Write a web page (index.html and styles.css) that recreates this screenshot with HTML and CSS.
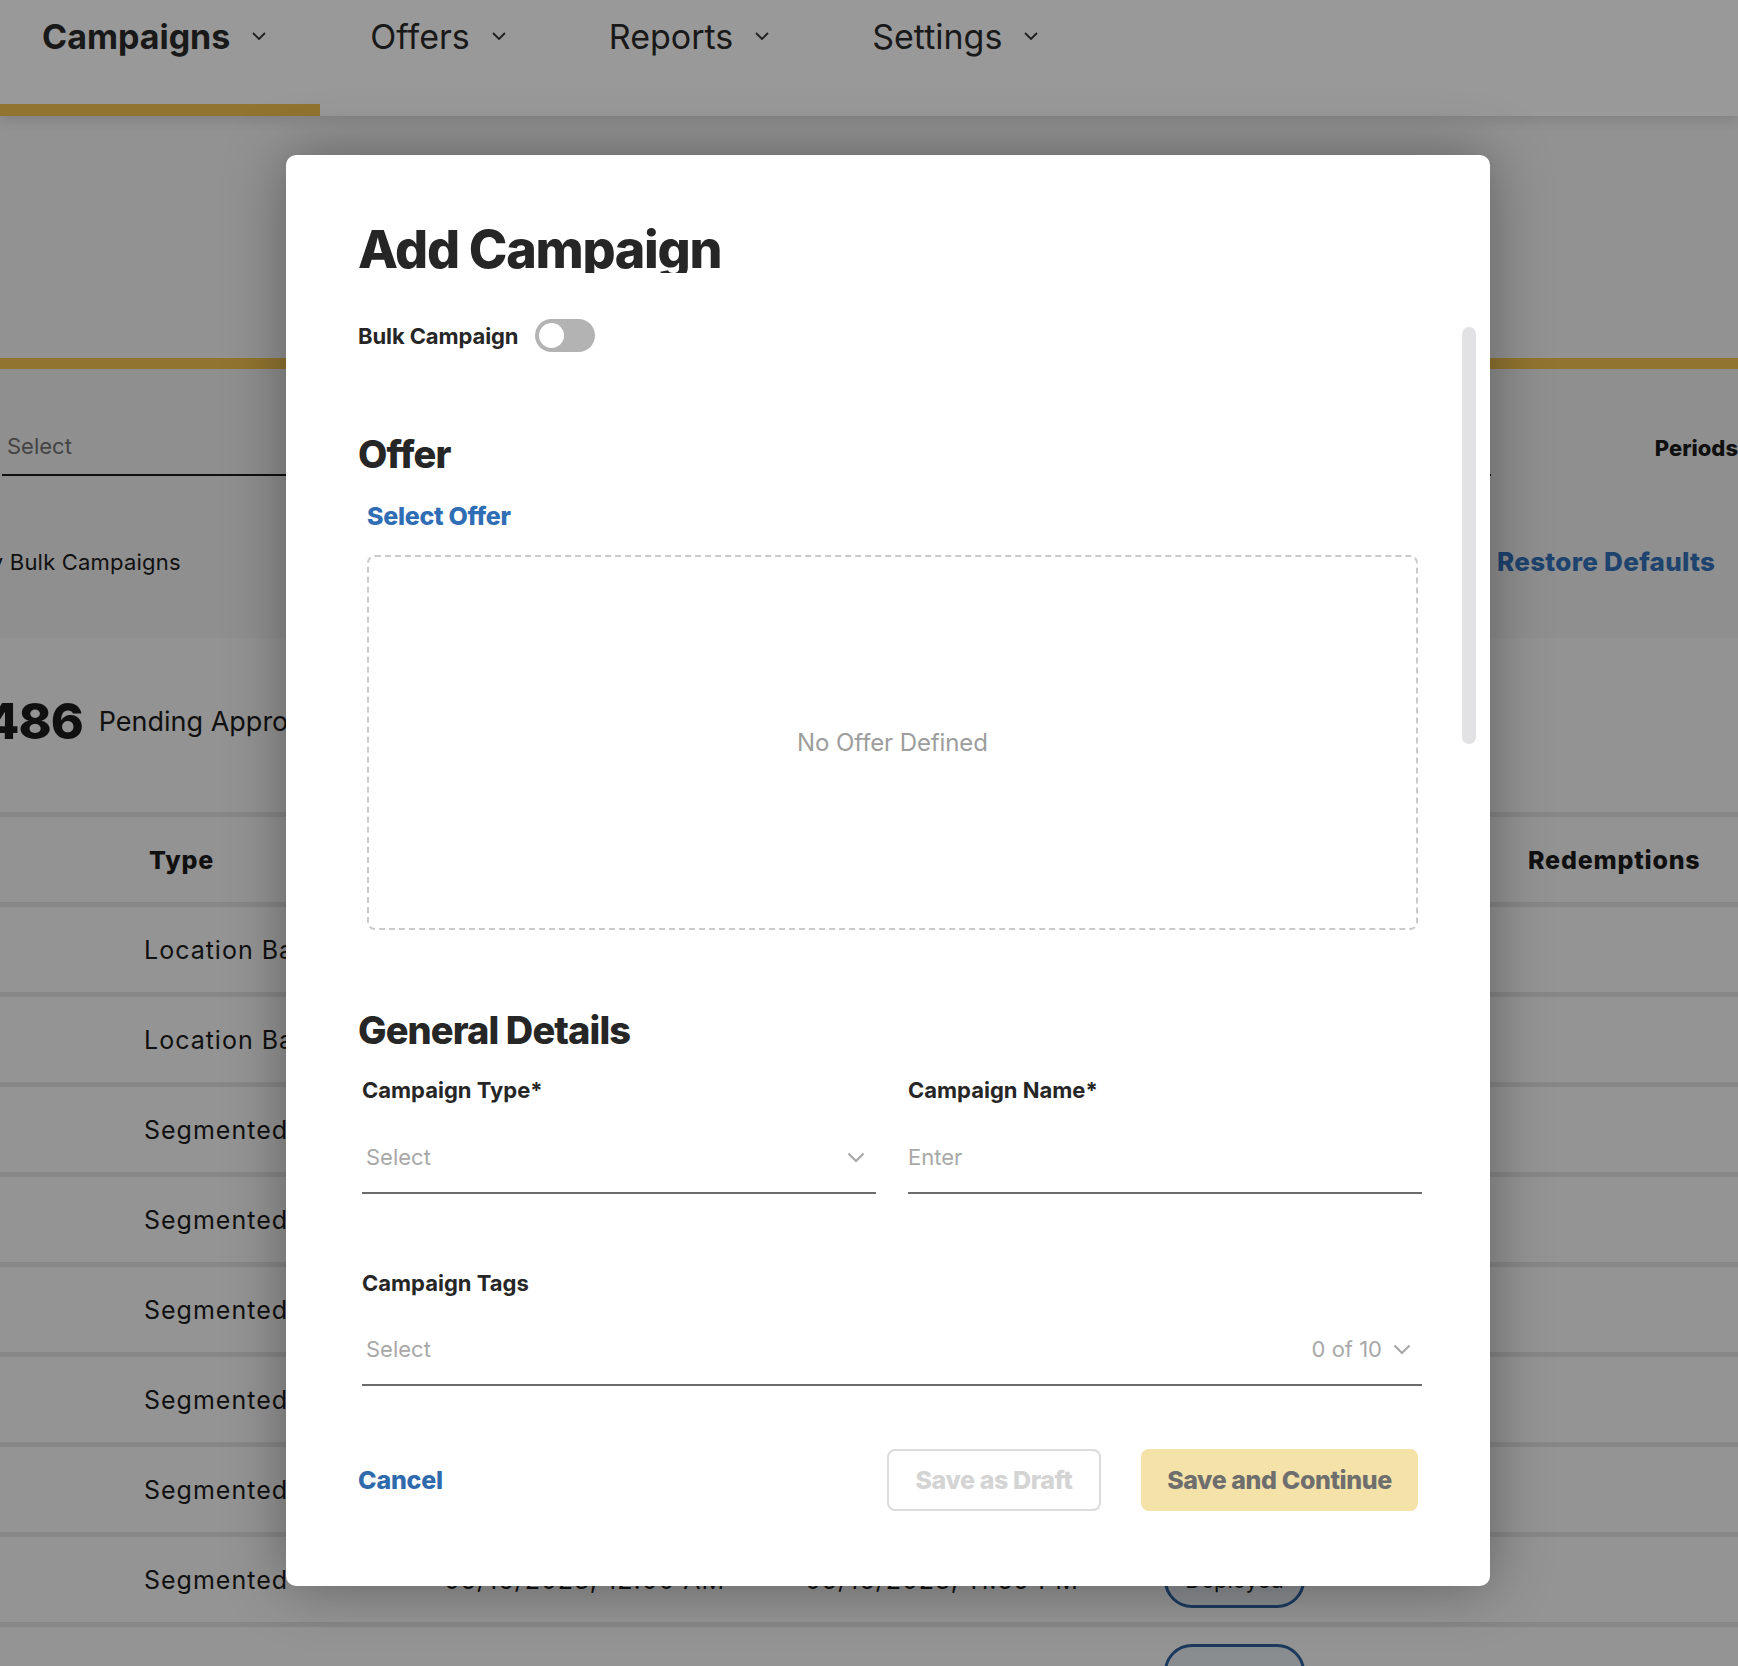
FILE: index.html
```html
<!DOCTYPE html>
<html lang="en">
<head>
  <meta charset="UTF-8">
  <meta name="viewport" content="width=device-width, initial-scale=1.0">
  <title>Add Campaign</title>
  <link rel="stylesheet" href="styles.css">
</head>
<body>
  <nav class="topnav">
    <div class="nav-item active">Campaigns <svg class="chev" viewBox="0 0 14 9"><polyline points="1,1 7,7 13,1"/></svg></div>
    <div class="nav-item">Offers <svg class="chev" viewBox="0 0 14 9"><polyline points="1,1 7,7 13,1"/></svg></div>
    <div class="nav-item">Reports <svg class="chev" viewBox="0 0 14 9"><polyline points="1,1 7,7 13,1"/></svg></div>
    <div class="nav-item">Settings <svg class="chev" viewBox="0 0 14 9"><polyline points="1,1 7,7 13,1"/></svg></div>
  </nav>

  <section class="hero"></section>
  <div class="gold-rule"></div>

  <section class="filters">
    <div class="filter-select">Select</div>
    <div class="periods">Periods</div>
    <div class="bulk-filter">Only Bulk Campaigns</div>
    <a class="restore">Restore Defaults</a>
  </section>

  <section class="stats">
    <span class="stat-num">486</span>
    <span class="stat-label">Pending Approval</span>
  </section>

  <div class="grid">
    <div class="trow thead">
      <span>Type</span><span>Start</span><span>End</span><span>Status</span><span>Redemptions</span>
    </div>
    <div class="trow"><span>Location Based</span><span>05/16/2023, 12:00 AM</span><span>05/16/2023, 11:59 PM</span><span><i class="pill">Deployed</i></span><span></span></div>
    <div class="trow"><span>Location Based</span><span>05/16/2023, 12:00 AM</span><span>05/16/2023, 11:59 PM</span><span><i class="pill">Deployed</i></span><span></span></div>
    <div class="trow"><span>Segmented</span><span>05/16/2023, 12:00 AM</span><span>05/16/2023, 11:59 PM</span><span><i class="pill">Deployed</i></span><span></span></div>
    <div class="trow"><span>Segmented</span><span>05/16/2023, 12:00 AM</span><span>05/16/2023, 11:59 PM</span><span><i class="pill">Deployed</i></span><span></span></div>
    <div class="trow"><span>Segmented</span><span>05/16/2023, 12:00 AM</span><span>05/16/2023, 11:59 PM</span><span><i class="pill">Deployed</i></span><span></span></div>
    <div class="trow"><span>Segmented</span><span>05/16/2023, 12:00 AM</span><span>05/16/2023, 11:59 PM</span><span><i class="pill">Deployed</i></span><span></span></div>
    <div class="trow"><span>Segmented</span><span>05/16/2023, 12:00 AM</span><span>05/16/2023, 11:59 PM</span><span><i class="pill">Deployed</i></span><span></span></div>
    <div class="trow"><span>Segmented</span><span>05/16/2023, 12:00 AM</span><span>05/16/2023, 11:59 PM</span><span><i class="pill">Deployed</i></span><span></span></div>
    <div class="trow tall"><span>Segmented</span><span>05/16/2023, 12:00 AM</span><span>05/16/2023, 11:59 PM</span><span><i class="pill">Pending<br>Approval</i></span><span></span></div>
  </div>

  <div class="overlay"></div>

  <div class="modal">
    <div class="scroll-thumb"></div>
    <h1 class="modal-title">Add Campaign</h1>

    <div class="bulk-row">
      <span class="bulk-label">Bulk Campaign</span>
      <span class="toggle"><span class="knob"></span></span>
    </div>

    <h2 class="section-title offer-title">Offer</h2>
    <a class="select-offer">Select Offer</a>
    <div class="offer-box">No Offer Defined</div>

    <h2 class="section-title details-title">General Details</h2>
    <div class="fields">
      <div class="field">
        <label>Campaign Type*</label>
        <div class="input">
          <span class="placeholder">Select</span>
          <svg class="input-chev" viewBox="0 0 18 11"><polyline points="1.5,1.5 9,9 16.5,1.5"/></svg>
        </div>
      </div>
      <div class="field">
        <label>Campaign Name*</label>
        <div class="input text">
          <span class="placeholder">Enter</span>
        </div>
      </div>
      <div class="field wide">
        <label>Campaign Tags</label>
        <div class="input">
          <span class="placeholder">Select</span>
          <span class="count">0 of 10</span>
          <svg class="input-chev" viewBox="0 0 18 11"><polyline points="1.5,1.5 9,9 16.5,1.5"/></svg>
        </div>
      </div>
    </div>

    <div class="modal-footer">
      <a class="cancel">Cancel</a>
      <div class="actions">
        <button class="btn-draft" disabled>Save as Draft</button>
        <button class="btn-continue" disabled>Save and Continue</button>
      </div>
    </div>
  </div>
</body>
</html>
```

FILE: styles.css
```css
* {
  box-sizing: border-box;
}
html, body {
  margin: 0;
}
body {
  width: 1738px;
  height: 1666px;
  overflow: hidden;
  position: relative;
  font-family: Inter, 'Liberation Sans', sans-serif;
  color: #1c1c1c;
  background: #f7f7f7;
}

/* top navigation */
.topnav {
  height: 116px;
  background: #fff;
  display: flex;
  padding-left: 42px;
  box-shadow: 0 4px 14px rgba(0,0,0,0.12);
  position: relative;
  z-index: 1;
}
.nav-item {
  position: relative;
  display: flex;
  align-items: center;
  gap: 22px;
  height: 72px;
  padding-right: 103px;
  font-size: 34px;
  color: #2b2b2b;
}
.nav-item.active {
  font-weight: 700;
  padding-right: 104px;
}
.nav-item.active::after {
  content: '';
  position: absolute;
  left: -42px;
  width: 320px;
  top: 104px;
  height: 12px;
  background: #f2c14f;
}
.chev {
  width: 14px;
  height: 9px;
  fill: none;
  stroke: #333;
  stroke-width: 1.8;
}

.hero {
  height: 242px;
  background: #f4f4f4;
}
.gold-rule {
  height: 11px;
  background: #f2c14f;
}

/* filters */
.filters {
  height: 269px;
  background: #eeeeee;
  display: grid;
  grid-template-columns: 1491px 1fr;
  grid-template-rows: 47px 69px 34px;
  padding-top: 60px;
}
.filter-select {
  margin-left: 2px;
  padding-left: 5px;
  font-size: 22px;
  line-height: 34px;
  color: #727272;
  border-bottom: 2px solid #1c1c1c;
}
.periods {
  justify-self: end;
  align-self: start;
  font-size: 22px;
  font-weight: 800;
  line-height: 38px;
}
.bulk-filter {
  grid-row: 3;
  margin-left: -45px;
  font-size: 22px;
  line-height: 34px;
  white-space: nowrap;
  letter-spacing: 0.2px;
}
.restore {
  grid-row: 3;
  margin-left: 6px;
  font-size: 26px;
  font-weight: 800;
  line-height: 34px;
  letter-spacing: 0.3px;
  color: #3271b8;
  white-space: nowrap;
}

/* stats */
.stats {
  height: 174px;
  background: #f5f5f5;
  display: flex;
  align-items: center;
  gap: 16px;
  padding-bottom: 8px;
}
.stat-num {
  margin-left: -15px;
  font-size: 50px;
  font-weight: 800;
  letter-spacing: -1px;
}
.stat-label {
  font-size: 27px;
}

/* table */
.grid {
  height: 856px;
  overflow: hidden;
}
.trow {
  display: grid;
  grid-template-columns: 300px 361px 359px 364px 1fr;
  align-items: center;
  height: 90px;
  padding-left: 144px;
  border-top: 5px solid #e2e2e2;
  background: #f7f7f7;
  font-size: 25px;
  letter-spacing: 1px;
  white-space: nowrap;
}
.trow.thead {
  font-weight: 800;
  font-size: 25px;
  letter-spacing: 0.8px;
  background: #f5f5f5;
}
.trow.thead span:first-child {
  padding-left: 5px;
}
.trow.tall {
  height: 150px;
}
.pill {
  display: inline-flex;
  align-items: center;
  justify-content: center;
  width: 141px;
  height: 56px;
  border: 3px solid #2d619d;
  border-radius: 28px;
  background: #e6ebf1;
  font-style: normal;
  font-size: 22px;
  letter-spacing: 0;
}
.tall .pill {
  height: 112px;
  text-align: center;
  line-height: 30px;
}

.overlay {
  position: absolute;
  inset: 0;
  background: rgba(0,0,0,0.4);
  z-index: 10;
}

/* modal */
.modal {
  position: absolute;
  left: 286px;
  top: 155px;
  width: 1204px;
  height: 1431px;
  z-index: 20;
  background: #fff;
  border-radius: 10px;
  box-shadow: 0 0 60px rgba(0,0,0,0.35);
  padding: 68px 68px 0 72px;
  overflow: hidden;
  color: #262626;
}
.scroll-thumb {
  position: absolute;
  right: 14px;
  top: 172px;
  width: 14px;
  height: 417px;
  border-radius: 7px;
  background: #e2e2e5;
}
.modal-title {
  margin: 0;
  font-size: 52px;
  font-weight: 800;
  line-height: 54px;
  height: 50px;
  overflow: hidden;
  letter-spacing: -1.3px;
}
.bulk-row {
  display: flex;
  align-items: center;
  gap: 17px;
  height: 33px;
  margin-top: 46px;
}
.bulk-label {
  font-size: 22px;
  font-weight: 700;
  letter-spacing: -0.1px;
}
.toggle {
  display: flex;
  align-items: center;
  width: 60px;
  height: 33px;
  border-radius: 17px;
  background: #b3b3b3;
  padding-left: 4px;
}
.knob {
  width: 25px;
  height: 25px;
  border-radius: 50%;
  background: #fff;
}
.section-title {
  margin: 0;
  font-size: 38px;
  font-weight: 800;
  line-height: 40px;
  letter-spacing: -0.9px;
}
.offer-title {
  margin-top: 82px;
}
.select-offer {
  display: block;
  margin: 28px 0 0 9px;
  font-size: 25px;
  font-weight: 800;
  line-height: 28px;
  letter-spacing: -0.3px;
  color: #2f6db5;
}
.offer-box {
  display: flex;
  align-items: center;
  justify-content: center;
  height: 375px;
  margin: 25px 4px 0 9px;
  border: 2px dashed #cbcbcb;
  border-radius: 8px;
  font-size: 24px;
  color: #9d9d9d;
  letter-spacing: -0.1px;
}
.details-title {
  margin-top: 80px;
}

/* form fields */
.fields {
  display: grid;
  grid-template-columns: 1fr 1fr;
  column-gap: 32px;
  margin-left: 4px;
}
.field.wide {
  grid-column: 1 / 3;
  margin-top: 76px;
}
.field label {
  display: block;
  margin-top: 27px;
  font-size: 22px;
  font-weight: 700;
  line-height: 26px;
  letter-spacing: 0;
}
.field.wide label {
  margin-top: 0;
}
.input {
  display: flex;
  align-items: center;
  gap: 11px;
  margin-top: 41px;
  padding: 0 11px 22px 4px;
  border-bottom: 2px solid #6b6b6b;
  font-size: 22px;
  line-height: 26px;
  color: #a8a8a8;
}
.input.text {
  padding-left: 0;
}
.field.wide .input {
  margin-top: 40px;
}
.placeholder {
  flex: 1;
}
.input-chev {
  width: 18px;
  height: 11px;
  fill: none;
  stroke: #a8a8a8;
  stroke-width: 2.2;
}

/* footer */
.modal-footer {
  display: flex;
  align-items: center;
  justify-content: space-between;
  margin: 63px 4px 0 0;
}
.cancel {
  font-size: 25px;
  font-weight: 800;
  color: #2f6aad;
  letter-spacing: -0.2px;
}
.actions {
  display: flex;
  gap: 40px;
}
.actions button {
  height: 62px;
  border-radius: 8px;
  font-family: inherit;
  font-size: 25px;
  font-weight: 800;
  letter-spacing: -0.4px;
}
.btn-draft {
  width: 214px;
  background: #fff;
  border: 2px solid #dcdcdc;
  color: #d4d4d4;
}
.btn-continue {
  width: 277px;
  background: #f4e2a9;
  border: none;
  color: #6e6e6e;
}
```
